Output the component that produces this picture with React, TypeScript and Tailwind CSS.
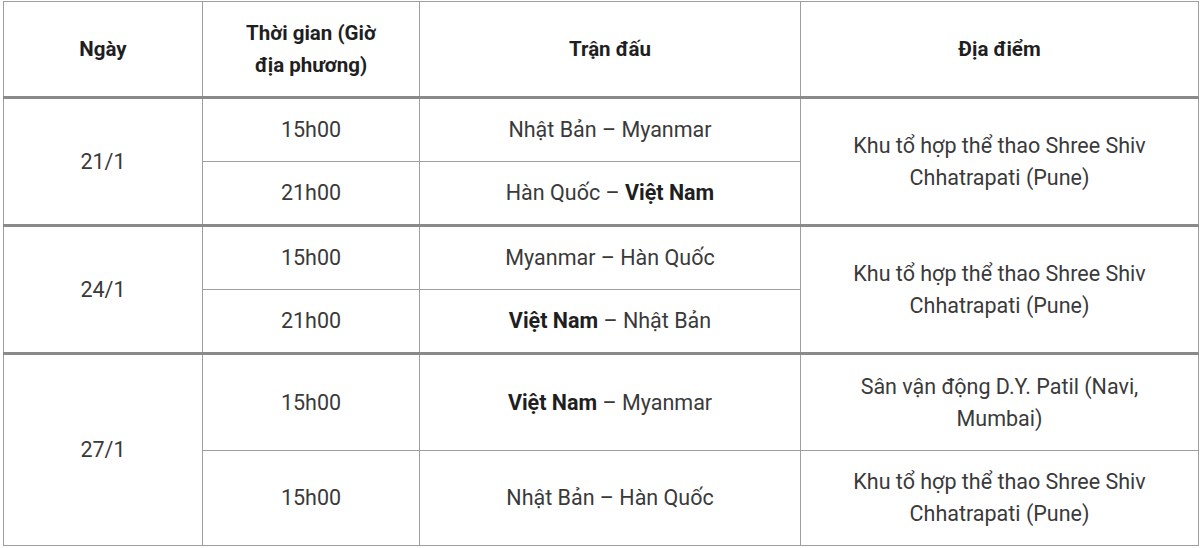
const cell = "border border-[#9e9e9e] text-center align-middle px-3";

type Match = { time: string; home: string; away: string };

const groups: { date: string; big?: boolean; matches: Match[]; venues: string[] }[] = [
  {
    date: "21/1",
    venues: ["Khu tổ hợp thể thao Shree Shiv Chhatrapati (Pune)"],
    matches: [
      { time: "15h00", home: "Nhật Bản", away: "Myanmar" },
      { time: "21h00", home: "Hàn Quốc", away: "Việt Nam" },
    ],
  },
  {
    date: "24/1",
    venues: ["Khu tổ hợp thể thao Shree Shiv Chhatrapati (Pune)"],
    matches: [
      { time: "15h00", home: "Myanmar", away: "Hàn Quốc" },
      { time: "21h00", home: "Việt Nam", away: "Nhật Bản" },
    ],
  },
  {
    date: "27/1",
    big: true,
    venues: ["Sân vận động D.Y. Patil (Navi, Mumbai)", "Khu tổ hợp thể thao Shree Shiv Chhatrapati (Pune)"],
    matches: [
      { time: "15h00", home: "Việt Nam", away: "Myanmar" },
      { time: "15h00", home: "Nhật Bản", away: "Hàn Quốc" },
    ],
  },
];

function Teams({ m }: { m: Match }) {
  const vn = (t: string) => (t === "Việt Nam" ? "font-bold text-[#1f1f1f]" : "");
  return (
    <>
      <span className={vn(m.home)}>{m.home}</span>
      {" – "}
      <span className={vn(m.away)}>{m.away}</span>
    </>
  );
}

export default function App() {
  return (
    <div className="w-[1200px] h-[548px] bg-white pl-[3px] pt-px" style={{ fontFamily: "Roboto, 'Liberation Sans', sans-serif" }}>
      <table className="w-[1195px] border-collapse table-fixed text-[21.5px] leading-[32px] text-[#3a3a3a]">
        <colgroup>
          <col className="w-[199px]" />
          <col className="w-[217px]" />
          <col className="w-[381px]" />
          <col className="w-[398px]" />
        </colgroup>
        <thead>
          <tr className="h-[96px] border-b-[3px] border-[#8a8a8a] text-[20.5px]">
            <th className={`${cell} font-bold text-[#1f1f1f]`}>Ngày</th>
            <th className={`${cell} font-bold text-[#1f1f1f] px-8`}>Thời gian (Giờ địa phương)</th>
            <th className={`${cell} font-bold text-[#1f1f1f]`}>Trận đấu</th>
            <th className={`${cell} font-bold text-[#1f1f1f]`}>Địa điểm</th>
          </tr>
        </thead>
        <tbody>
          {groups.map((g, gi) => (
            <>
              <tr
                key={`${gi}a`}
                className={`${g.big ? "h-[97px]" : "h-[64px]"} ${gi > 0 ? "border-t-[3px] border-[#8a8a8a]" : ""}`}
              >
                <td rowSpan={2} className={cell}>{g.date}</td>
                <td className={cell}>{g.matches[0].time}</td>
                <td className={cell}><Teams m={g.matches[0]} /></td>
                <td rowSpan={g.venues.length === 1 ? 2 : 1} className={`${cell} px-10`}>{g.venues[0]}</td>
              </tr>
              <tr key={`${gi}b`} className={g.big ? "h-[95px]" : "h-[64px]"}>
                <td className={cell}>{g.matches[1].time}</td>
                <td className={cell}><Teams m={g.matches[1]} /></td>
                {g.venues.length > 1 && <td className={`${cell} px-10`}>{g.venues[1]}</td>}
              </tr>
            </>
          ))}
        </tbody>
      </table>
    </div>
  );
}
